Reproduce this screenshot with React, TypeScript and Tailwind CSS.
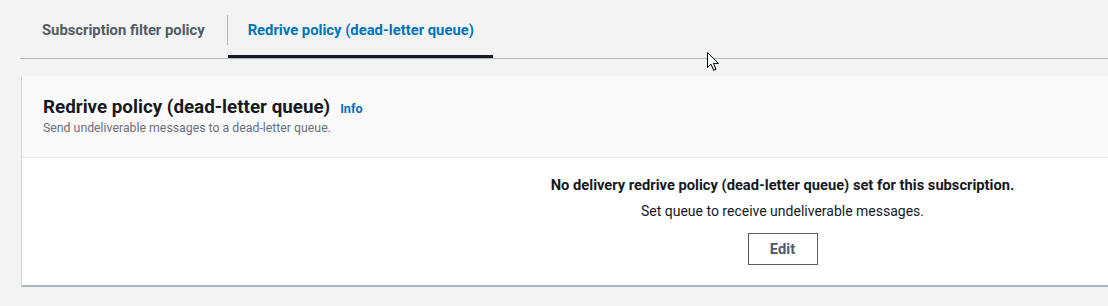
export default function App() {
    return (
        <div className="relative h-[306px] w-[1108px] overflow-hidden bg-[#f2f3f3] font-['Roboto',sans-serif] text-[#16191f]">
            <div className="ml-[20px] flex h-[59px] w-[1600px] items-stretch border-b border-[#aab7b8]">
                <div className="flex items-center pl-[22px] pr-[22px] pt-[2px] text-[14.8px] font-bold text-[#545b64]">
                    Subscription filter policy
                </div>
                <div className="mt-[15px] h-[30px] w-px bg-[#aab7b8]" />
                <div className="flex items-center border-b-[3px] border-[#16191f] pl-[20px] pr-[19px] pt-[5px] text-[14.8px] font-bold text-[#0073bb]">
                    Redrive policy (dead-letter queue)
                </div>
            </div>

            <div className="ml-[21px] mt-[17px] w-[1522px] border-l border-[#d5dbdb] border-b-2 border-b-[#aab7b8] bg-white">
                <div className="h-[82px] border-b border-[#eaeded] bg-[#fafafa] px-[21px] pt-[19px]">
                    <div className="flex items-baseline gap-[10px]">
                        <h2 className="text-[18.8px] font-bold leading-[24px]">Redrive policy (dead-letter queue)</h2>
                        <a className="text-[12.6px] font-bold text-[#0073bb]">Info</a>
                    </div>
                    <p className="mt-[1px] text-[12.3px] leading-[16px] text-[#687078]">
                        Send undeliverable messages to a dead-letter queue.
                    </p>
                </div>
                <div className="flex h-[127px] flex-col items-center pt-[17px] text-[14px]">
                    <p className="text-[14.7px] font-bold leading-[20px]">No delivery redrive policy (dead-letter queue) set for this subscription.</p>
                    <p className="mt-[6px] leading-[20px] text-[#16191f]">Set queue to receive undeliverable messages.</p>
                    <button className="mt-[12px] h-[32px] w-[70px] border border-[#545b64] bg-white text-[14.7px] font-bold text-[#545b64]">
                        Edit
                    </button>
                </div>
            </div>

            {/* mouse pointer captured in the screenshot */}
            <svg className="absolute left-[707px] top-[52px]" width="13" height="20" viewBox="0 0 13 20">
                <path d="M0.5 0.5 L0.5 15.5 L4 12.2 L6.6 18.3 L9 17.3 L6.5 11.4 L11.5 11.4 Z" fill="#fff" stroke="#000" strokeWidth="1" strokeLinejoin="miter" />
            </svg>
        </div>
    );
}
